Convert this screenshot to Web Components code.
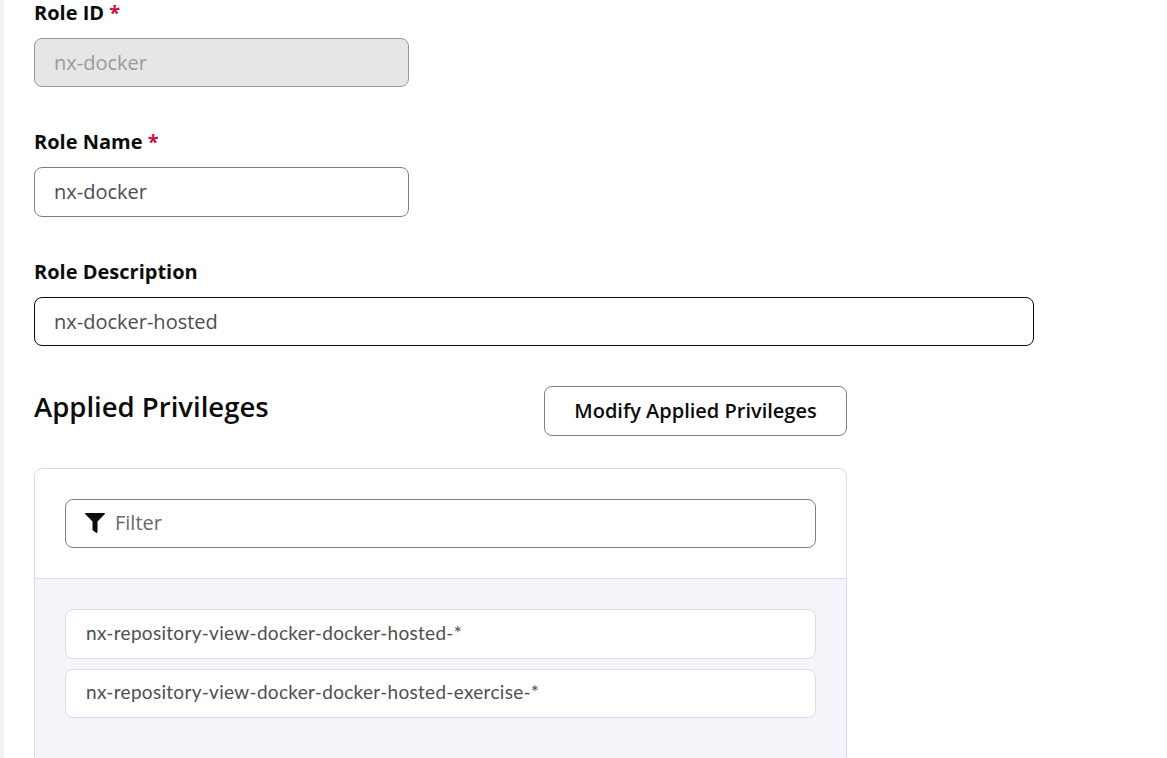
<!DOCTYPE html>
<html lang="en">
<head>
<meta charset="utf-8">
<title>Role</title>
<style>
html,body{margin:0;height:100%;overflow:hidden;background:#fff}
body{font-family:"Open Sans",sans-serif;color:#0c0c0d}
</style>
</head>
<body>
<role-form></role-form>
<script>
function define(name, markup, setup) {
  const template = document.createElement('template');
  template.innerHTML = markup;
  customElements.define(name, class extends HTMLElement {
    constructor() {
      super();
      this.attachShadow({mode: 'open'}).append(template.content.cloneNode(true));
    }
    connectedCallback() { if (setup) setup(this, this.shadowRoot); }
  });
}

define('form-field', `
<style>
:host{display:block;width:375px}
:host([wide]){width:1000px}
.label{height:28px;line-height:28px;font-size:20px;font-weight:700;white-space:pre}
.star{color:#cd0f3f}
.box{box-sizing:border-box;height:var(--box-height,49px);margin-top:11px;padding:0 19px var(--box-bottom,0);display:flex;align-items:center;border:1px solid #7f7f81;border-radius:8px;background:#fff;color:#4d4d4f;font-size:20px}
:host([active]) .box{border-color:#0c0c0d}
:host([disabled]) .box{background:#e6e6e6;color:#9a9a9b;border-color:#98989a}
:host(:not([required])) .star{display:none}
</style>
<div class="label"><span class="name"></span><span class="star"> *</span></div>
<div class="box"><slot></slot></div>`,
(el, root) => { root.querySelector('.name').textContent = el.getAttribute('label'); });

define('outline-button', `
<style>
:host{box-sizing:border-box;display:flex;align-items:center;justify-content:center;width:303px;height:50px;padding-bottom:2px;border:1px solid #7f7f81;border-radius:8px;font-size:20px;font-weight:600;white-space:nowrap}
</style><slot></slot>`);

define('filter-input', `
<style>
:host{box-sizing:border-box;display:flex;align-items:center;gap:10px;height:49px;padding:0 19px 2px;border:1px solid #7f7f81;border-radius:8px;background:#fff;color:#69696b;font-size:20px}
svg{display:block;width:20px;height:20px;fill:#0c0c0d}
</style>
<svg viewBox="0 0 20 20"><path d="M.7 0H19.3Q20.5.3 19.7 1.3L12.5 8.5V19Q12.2 20.3 11.1 19.7L8 17.6Q7.5 17.2 7.5 16.6V8.5L.3 1.3Q-.4.4.7 0Z"/></svg>
<slot></slot>`);

define('list-item', `
<style>
:host{box-sizing:border-box;display:flex;align-items:center;height:50px;padding:0 20px 4px;border:1px solid #d9dcf0;border-radius:8px;background:#fff;color:#4f4f51;font:400 19px Lato,sans-serif;letter-spacing:.3px;white-space:nowrap}
:host(:last-child){height:49px}
</style><slot></slot>`);

define('privilege-panel', `
<style>
:host{box-sizing:border-box;display:flex;flex-direction:column;width:813px;height:340px;border:1px solid #d9dcf0;border-radius:8px;overflow:hidden}
.head{padding:30px}
.list{flex:1;display:flex;flex-direction:column;gap:10px;padding:30px;border-top:1px solid #d9dcf0;background:#f4f5fb}
</style>
<div class="head"><slot name="filter"></slot></div>
<div class="list"><slot></slot></div>`);

define('role-form', `
<style>
:host{box-sizing:border-box;display:block;height:758px;overflow:hidden;border-left:4px solid #f3f3f3;padding-left:30px}
.fields{display:flex;flex-direction:column;margin-top:-1px}
.name{margin-top:41px;--box-height:50px;--box-bottom:2px}
.desc{margin-top:41px}
.heading{display:flex;justify-content:space-between;align-items:flex-start;width:813px;height:82px;margin-top:40px}
h2{margin:0;font-size:27.5px;line-height:42px;font-weight:580}
</style>
<div class="fields">
<form-field label="Role ID" required disabled>nx-docker</form-field>
<form-field class="name" label="Role Name" required>nx-docker</form-field>
<form-field class="desc" label="Role Description" wide active>nx-docker-hosted</form-field>
</div>
<div class="heading"><h2>Applied Privileges</h2><outline-button>Modify Applied Privileges</outline-button></div>
<privilege-panel>
<filter-input slot="filter">Filter</filter-input>
<list-item>nx-repository-view-docker-docker-hosted-*</list-item>
<list-item>nx-repository-view-docker-docker-hosted-exercise-*</list-item>
</privilege-panel>`);
</script>
</body>
</html>
